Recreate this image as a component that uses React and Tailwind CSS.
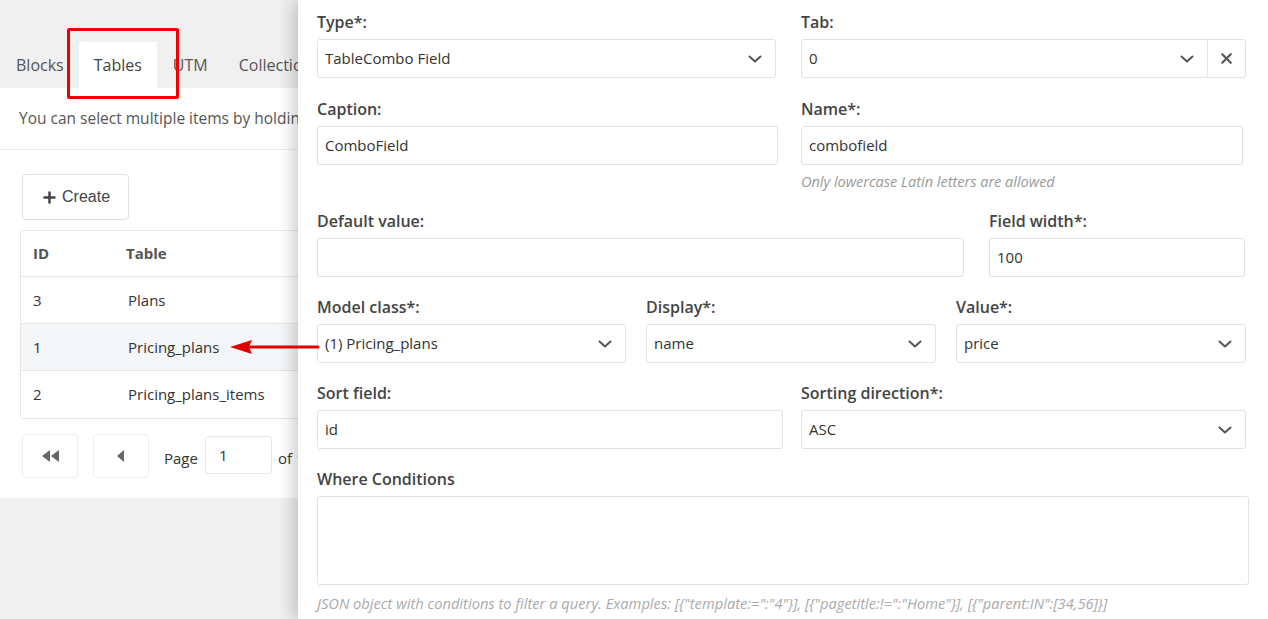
import { X, Plus } from "lucide-react";

const Chevron = () => (
    <svg className="w-[16px] h-[16px] text-[#555]" viewBox="0 0 16 16" fill="none">
        <path d="M2.5 5.5 8 10.5l5.5-5" stroke="currentColor" strokeWidth="2" strokeLinecap="round" strokeLinejoin="round" />
    </svg>
);

const Label = ({ children }) => (
    <div className="text-[16px] font-semibold text-[#444] leading-[20px] mb-[7px]">{children}</div>
);

const Input = ({ value }) => (
    <div className="h-[39px] border border-[#e2e2e2] rounded-[3px] px-[7px] flex items-center text-[15px] text-[#333] bg-white">
        {value}
    </div>
);

const Select = ({ value }) => (
    <div className="h-[39px] border border-[#e2e2e2] rounded-[3px] pl-[7px] pr-[12px] flex items-center justify-between text-[15px] text-[#333] bg-white">
        <span>{value}</span>
        <Chevron />
    </div>
);

const rows = [
    { id: 3, name: "Plans" },
    { id: 1, name: "Pricing_plans", active: true },
    { id: 2, name: "Pricing_plans_items" },
];

const App = () => {
    return (
        <div className="relative flex h-[619px] w-[1268px] overflow-hidden bg-[#f0f0f0]" style={{ fontFamily: '"Open Sans", "Noto Sans", sans-serif' }}>
            {/* left: the page underneath */}
            <div className="w-[298px] shrink-0 overflow-hidden">
                <div className="w-[620px]">
                    <div className="h-[88px] flex items-end pl-[1px] text-[16px] text-[#555]">
                        <div className="px-[15px] h-[46px] flex items-center">Blocks</div>
                        <div className="px-[15px] h-[46px] flex items-center bg-white text-[#444]">Tables</div>
                        <div className="px-[16px] h-[46px] flex items-center">UTM</div>
                        <div className="px-[15px] h-[46px] flex items-center">Collections</div>
                    </div>
                    <div className="bg-white h-[410px]">
                        <div className="h-[62px] flex items-center px-[19px] text-[15.5px] text-[#555] border-b border-[#ececec]">
                            You can select multiple items by holding Ctrl
                        </div>
                        <div className="pl-[20px] pt-[24px]">
                            <button className="ml-[2px] h-[46px] px-[18px] flex items-center gap-[4px] border border-[#dedede] rounded-[4px] text-[16px] text-[#444]" style={{ fontFamily: '"Liberation Sans", Arial, sans-serif' }}>
                                <Plus className="w-[17px] h-[17px]" strokeWidth={3.5} />
                                Create
                            </button>
                            <div className="mt-[10px] border border-[#e6e6e6] rounded-[3px] text-[15px] text-[#333]">
                                <div className="h-[46px] flex items-center border-b border-[#e6e6e6] font-bold text-[#555]">
                                    <div className="w-[105px] pl-[12px]">ID</div>
                                    <div>Table</div>
                                </div>
                                {rows.map((row, idx) => (
                                    <div
                                        key={row.id}
                                        className={`h-[47px] flex items-center ${idx < rows.length - 1 ? "border-b border-[#e6e6e6]" : ""} ${row.active ? "bg-[#f5f6f8]" : ""}`}
                                    >
                                        <div className="w-[107px] pl-[12px]">{row.id}</div>
                                        <div>{row.name}</div>
                                    </div>
                                ))}
                            </div>
                            <div className="mt-[15px] flex items-center text-[15px] text-[#333]">
                                <div className="ml-[2px] w-[56px] h-[44px] border border-[#eee] rounded-[4px] flex items-center justify-center text-[#666]">
                                    <svg className="w-[20px] h-[14px]" viewBox="0 0 20 14" fill="currentColor">
                                        <path d="M10 1v12L2 7z" />
                                        <path d="M19 1v12l-8-6z" />
                                    </svg>
                                </div>
                                <div className="ml-[15px] w-[56px] h-[44px] border border-[#eee] rounded-[4px] flex items-center justify-center text-[#666]">
                                    <svg className="w-[10px] h-[14px]" viewBox="0 0 10 14" fill="currentColor">
                                        <path d="M8 1v12L1 7z" />
                                    </svg>
                                </div>
                                <span className="ml-[15px] mt-[5px]">Page</span>
                                <div className="ml-[7px] w-[67px] h-[38px] border border-[#e6e6e6] rounded-[3px] flex items-center px-[13px] -mt-[2px]">1</div>
                                <span className="ml-[6px] mt-[5px]">of 1</span>
                            </div>
                        </div>
                    </div>
                </div>
            </div>

            {/* right: the slide-over panel */}
            <div className="relative z-10 flex-1 bg-white shadow-[-6px_0_14px_rgba(0,0,0,0.18)] pl-[19px] pr-[19px] pt-[12px]">
                <div className="grid grid-cols-[459px_1fr] gap-x-[25px] pr-[3px]">
                    <div>
                        <Label>Type*:</Label>
                        <Select value="TableCombo Field" />
                    </div>
                    <div>
                        <Label>Tab:</Label>
                        <div className="h-[39px] border border-[#e2e2e2] rounded-[3px] flex items-center text-[15px] text-[#333]">
                            <span className="flex-1 pl-[7px]">0</span>
                            <span className="px-[12px]"><Chevron /></span>
                            <span className="h-full w-[38px] border-l border-[#e2e2e2] flex items-center justify-center">
                                <X className="w-[17px] h-[17px] text-[#555]" strokeWidth={3} />
                            </span>
                        </div>
                    </div>
                </div>

                <div className="grid grid-cols-[461px_1fr] gap-x-[23px] mt-[21px] pr-[6px]">
                    <div>
                        <Label>Caption:</Label>
                        <Input value="ComboField" />
                    </div>
                    <div>
                        <Label>Name*:</Label>
                        <Input value="combofield" />
                        <div className="mt-[7px] text-[14.5px] italic text-[#999] leading-[20px]">Only lowercase Latin letters are allowed</div>
                    </div>
                </div>

                <div className="grid grid-cols-[647px_1fr] gap-x-[25px] mt-[19px] pr-[4px]">
                    <div>
                        <Label>Default value:</Label>
                        <Input value="" />
                    </div>
                    <div>
                        <Label>Field width*:</Label>
                        <Input value="100" />
                    </div>
                </div>

                <div className="grid grid-cols-[309px_290px_1fr] gap-x-[20px] mt-[20px] pr-[3px]">
                    <div>
                        <Label>Model class*:</Label>
                        <Select value="(1) Pricing_plans" />
                    </div>
                    <div>
                        <Label>Display*:</Label>
                        <Select value="name" />
                    </div>
                    <div>
                        <Label>Value*:</Label>
                        <Select value="price" />
                    </div>
                </div>

                <div className="grid grid-cols-[466px_1fr] gap-x-[18px] mt-[20px] pr-[3px]">
                    <div>
                        <Label>Sort field:</Label>
                        <Input value="id" />
                    </div>
                    <div>
                        <Label>Sorting direction*:</Label>
                        <Select value="ASC" />
                    </div>
                </div>

                <div className="mt-[20px]">
                    <div className="text-[16px] font-semibold text-[#444] leading-[20px] mb-[7px]">Where Conditions</div>
                    <div className="h-[89px] border border-[#e2e2e2] rounded-[3px]" />
                    <div className="mt-[8px] text-[14.7px] italic text-[#aaa] leading-[20px]">
                        {'JSON object with conditions to filter a query. Examples: [{"template:=":"4"}], [{"pagetitle:!=":"Home"}], [{"parent:IN":[34,56]}]'}
                    </div>
                </div>
            </div>

            {/* annotations */}
            <div className="absolute left-[67px] top-[28px] w-[112px] h-[71px] border-[3px] border-[#ee0000] rounded-[2px] z-20" />
            <svg className="absolute left-[226px] top-[337px] z-20" width="96" height="20" viewBox="0 0 96 20">
                <path d="M24 10H92" stroke="#e00000" strokeWidth="3" strokeLinecap="round" />
                <path d="M4 10 26 3 23 10 26 17z" fill="#e00000" />
            </svg>
        </div>
    );
};

export default App;
